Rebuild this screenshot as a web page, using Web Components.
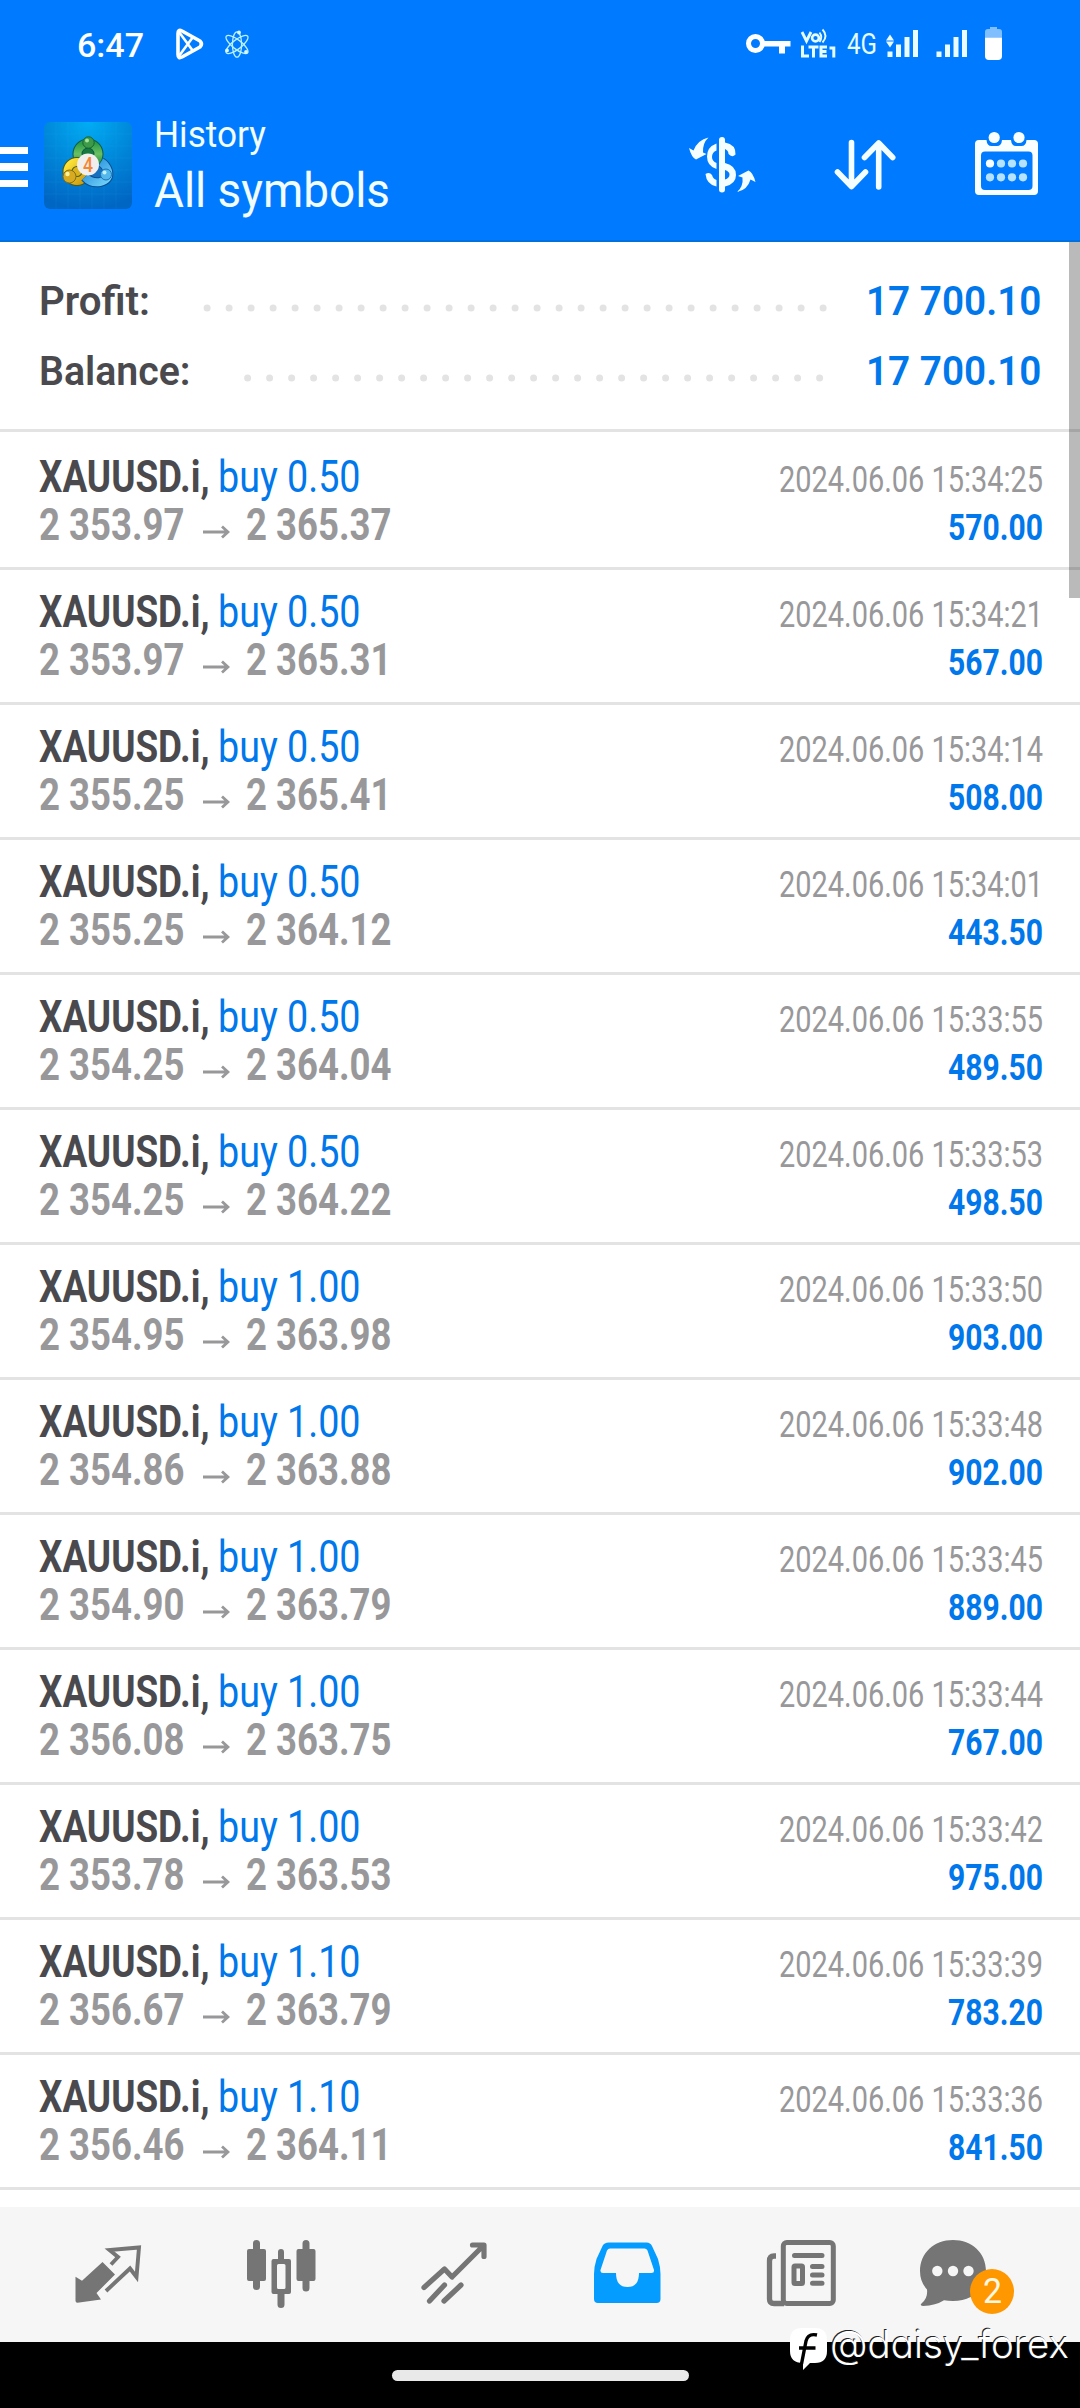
<!DOCTYPE html>
<html lang="en">
<head>
<meta charset="utf-8">
<title>History</title>
<style>
html,body{margin:0;padding:0;background:#fff}
body{width:1080px;height:2408px;overflow:hidden;font-family:Roboto,"Noto Sans",sans-serif}
</style>
</head>
<body>
<history-app></history-app>
<script>
const define = (name, html, setup) => {
  const t = document.createElement('template');
  t.innerHTML = html;
  customElements.define(name, class extends HTMLElement {
    connectedCallback() {
      if (this.shadowRoot) return;
      this.attachShadow({mode: 'open'}).append(t.content.cloneNode(true));
      if (setup) setup(this, this.shadowRoot);
    }
  });
};

/* Text narrowed so that the sample string would take w pixels. */
define('fit-text', `<style>
:host{display:block;white-space:pre;flex:none}
span{display:inline-block;transform-origin:0 50%}
</style><span></span>`, (el, root) => {
  const s = root.querySelector('span');
  const text = el.getAttribute('text');
  s.textContent = el.getAttribute('sample') || text;
  const k = (+el.getAttribute('w')) / s.getBoundingClientRect().width;
  s.textContent = text;
  const own = s.getBoundingClientRect().width;
  s.style.transform = 'scaleX(' + k + ')';
  el.style.width = own * k + 'px';
});

define('status-bar', `<style>
:host{display:flex;height:86px;color:#fff;align-items:flex-start;box-sizing:border-box}
.time{margin:27px 0 0 76.5px;font-size:34px;line-height:36px;font-weight:500;width:98px}
svg{display:block;flex:none}
</style>
<fit-text class="time" w="67" text="6:47"></fit-text>
<svg style="margin-left:30px" width="90" height="86" viewBox="174 0 90 86" fill="none" stroke="#fff">
 <path d="M178 33.500q0-4.500 4-2.500l18 10q3 3 0 6l-18 10q-4 2-4-2.500z" stroke-width="3.600" stroke-linejoin="round"/>
 <path d="M179 32l14 19M179 56l14-19" stroke-width="2.600"/>
 <g stroke="#b9f1ff" stroke-width="1.300"><ellipse cx="237" cy="44.500" rx="4.600" ry="12.700"/>
 <ellipse cx="237" cy="44.500" rx="4.600" ry="13.500" transform="rotate(52 237 44.500)"/><ellipse cx="237" cy="44.500" rx="4.600" ry="13.500" transform="rotate(-52 237 44.500)"/></g>
 <g fill="#d8f8ff" stroke="none"><circle cx="239" cy="32.500" r="1.900"/><circle cx="227" cy="50.500" r="1.900"/><circle cx="246" cy="52" r="1.900"/></g>
</svg>
<svg style="margin-left:475.500px" width="100" height="86" viewBox="740 0 100 86" fill="#fff">
 <circle cx="756.500" cy="43.500" r="7" fill="none" stroke="#fff" stroke-width="5"/>
 <path d="M765 41h26.500v5.500H786v7h-6v-7h-15z"/>
 <g fill="none" stroke="#e4fbff"><circle cx="816.500" cy="38" r="3.400" stroke-width="2.600"/>
 <path d="M803 32l4.500 9 4.500-9" stroke-width="2.800"/>
 <path d="M820.500 32.500q3.500 4.500 0 9.500M823.500 29.500q6 6.500 0 13" stroke-width="1.900"/></g>
</svg>
<svg style="margin-left:-38px" width="44" height="86" viewBox="802 0 44 86" fill="none" stroke="#e4fbff" stroke-width="3">
 <path d="M803.500 45.500v10.500h6.500M809.500 47h10M814.500 46v11.500M828 47h-6v9h6M822 51.500h5.500M830.500 48h4.300v9.500"/>
</svg>
<fit-text style="margin:29px 0 0 2px;font-size:29px;line-height:30px;color:#e4fbff" w="30" text="4G"></fit-text>
<svg style="margin-left:4px" width="126" height="86" viewBox="882 0 126 86" fill="#eafcff">
 <path d="M891 34.500l4 6h-8zM891 47.500l4-6h-8z" /><path d="M888.500 51.500h5V57h-5zM897 44.500h5V57h-5zM905.500 37h5V57h-5zM914 30h5V57h-5z"/>
 <path d="M937.500 51.500h5V57h-5zM946 44.500h5V57h-5zM954.500 37h5V57h-5zM963 30h5V57h-5z"/>
 <path d="M991 29v-2h7v2h2q3 0 3 3v5.500h-17V32q0-3 3-3z" fill="#80bfff"/>
 <path d="M986 37.500h17V56q0 4-4 4h-9q-4 0-4-4z" fill="#fff"/>
</svg>`);

define('app-logo', `<style>:host{display:block;width:88px;height:87px}svg{display:block}</style>
<svg width="88" height="87" viewBox="44 122 88 87">
<defs><radialGradient id="bg" cx="50%" cy="0%" r="100%"><stop offset="0" stop-color="#00adf4"/><stop offset=".55" stop-color="#0084d8"/><stop offset="1" stop-color="#0066c4"/></radialGradient>
<linearGradient id="g" x1="0" y1="0" x2="0" y2="1"><stop offset="0" stop-color="#2d9d48"/><stop offset=".5" stop-color="#6cc063"/><stop offset="1" stop-color="#1f8c3c"/></linearGradient>
<linearGradient id="y" x1="0" y1="0" x2="1" y2="1"><stop offset="0" stop-color="#ffe63a"/><stop offset="1" stop-color="#c99a10"/></linearGradient>
<linearGradient id="b" x1="0" y1="0" x2="1" y2="1"><stop offset="0" stop-color="#1c86d8"/><stop offset="1" stop-color="#6fd0f7"/></linearGradient></defs>
<rect x="44" y="122" width="88" height="87" rx="6" fill="url(#bg)"/>
<path d="M56 122v87M68 122v87M80 122v87M92 122v87M104 122v87M116 122v87M44 134h88M44 146h88M44 158h88M44 170h88M44 182h88M44 194h88" stroke="#39b6f0" stroke-opacity=".1"/>
<circle cx="88" cy="154" r="10.500" fill="#177a3c" stroke="#0b5b4a" stroke-width="10"/><circle cx="88" cy="154" r="10.500" fill="none" stroke="url(#g)" stroke-width="8"/>
<circle cx="77" cy="171.500" r="9.500" fill="#d9b21c" stroke="#4b5a18" stroke-width="10"/><circle cx="77" cy="171.500" r="9.500" fill="none" stroke="url(#y)" stroke-width="8"/>
<path d="M85 177q6 6.500 15 5 10-2 8-11-2-6-7-9" fill="#1670c0" stroke="#0a4e92" stroke-width="10"/><path d="M85 177q6 6.500 15 5 10-2 8-11-2-6-7-9" fill="none" stroke="url(#b)" stroke-width="8"/>
<circle cx="88.500" cy="142.500" r="5.700" fill="#3c9a48" stroke="#176333"/><circle cx="87" cy="140.500" r="2" fill="#a5e39a"/>
<circle cx="69.500" cy="176.500" r="6.500" fill="#d8aa20" stroke="#81701b"/><circle cx="67.500" cy="174" r="2.200" fill="#fff49d"/>
<circle cx="106" cy="174.500" r="5.500" fill="#55b8ea" stroke="#1971b8"/><circle cx="104.500" cy="172.500" r="2" fill="#c5f0ff"/>
<circle cx="88" cy="164.500" r="11" fill="#f1efed"/>
<text x="88" y="171.500" text-anchor="middle" font-family="Roboto" font-weight="500" font-size="19.500" fill="#f58634" textLength="10" lengthAdjust="spacingAndGlyphs">4</text>
</svg>`);

define('app-header', `<style>
:host{display:flex;height:156px;color:#f2fdff;align-items:flex-start}
svg{display:block;flex:none}
.menu{display:flex;flex-direction:column;gap:9px;margin-top:60.500px;width:28px}
.menu i{height:7.500px;background:#fff}
app-logo{margin:36px 0 0 16px;flex:none}
.t{margin:28px 0 0 21.500px;width:526px}
.a{font-size:36px;line-height:42px}.b{font-size:47.500px;line-height:56px;margin:6.500px 0 0 0}
</style>
<div class="menu"><i></i><i></i><i></i></div>
<app-logo></app-logo>
<div class="t"><fit-text class="a" w="112" text="History"></fit-text><fit-text class="b" w="236" text="All symbols"></fit-text></div>
<svg width="390" height="120" viewBox="680 86 390 120">
 <g fill="#f4feff">
 <rect x="719" y="137" width="6" height="55.500" rx="3"/>
 <path d="M716.500 143.500v7q-4.500 1.500-4.500 6.500 0 4 4.500 6v6q-9.500-3-9.500-12.500 0-9.500 9.500-13z"/>
 <path d="M725 142.500q11 2 10.500 12-3.500 3.500-7-.500 0-3.500-3.500-5z"/>
 <path d="M725 163q11 2.500 11 12 0 9-11 11.500v-7q4.500-1.500 4.500-5 0-3-4.500-4.500z" fill-rule="evenodd"/>
 <path d="M705.500 174q4-2.500 6.500 1 1 4 4.500 5v6.500q-10-2-11-12.500z"/>
 <path d="M708.500 137.500q-6 5.500-5.500 15l3.500 1.500-10.500 5.500q-4.500-2-7-11.500l4.500 2.500q4-10.500 15-13z"/>
 <path d="M737 192q6.500-5.500 5.500-14.500l-4.500-1.500 10.500-5.500q4.500 2 7 11.500l-5-2.500q-3 10.500-13.500 12.500z"/>
 </g>
 <path d="M851.500 142.500v44M837.500 172l14 14.500 14-14.500M878.700 187v-43M864.500 157.500l14.200-14.500 14 14.500" fill="none" stroke="#f4feff" stroke-width="5.600" stroke-linecap="round" stroke-linejoin="round"/>
 <path fill="#f9ffff" fill-rule="evenodd" d="M979 140h7.500q.500 6 5 6h5.500q4.500 0 5-6h9q.500 6 5 6h5.500q4.500 0 5-6h7.500q4 0 4 4v47q0 4-4 4h-55q-4 0-4-4v-47q0-4 4-4zM985 151.500q-4 0-4 4v30.500q0 4 4 4h43.500q4 0 4-4v-30.500q0-4-4-4z"/>
 <g fill="#f9ffff"><circle cx="994.200" cy="137.500" r="5.600"/><circle cx="1019" cy="137.500" r="5.600"/><circle cx="990" cy="163.500" r="4.100"/></g>
 <g fill="#b5e2ff"><circle cx="1001" cy="163.500" r="4.100"/><circle cx="1012" cy="163.500" r="4.100"/><circle cx="1023" cy="163.500" r="4.100"/><circle cx="990" cy="177.300" r="4.100"/><circle cx="1001" cy="177.300" r="4.100"/><circle cx="1012" cy="177.300" r="4.100"/><circle cx="1023" cy="177.300" r="4.100"/></g>
</svg>`);

define('summary-line', `<style>
:host{display:flex;height:70px;align-items:flex-start;font-weight:600;font-size:40px;line-height:70px}
.l{color:#4a4a4e;margin-left:38.500px}
.v{color:#0077eb;margin-right:38.500px}
.d{flex:1;height:8px;margin-top:37px}
svg{display:block;width:100%;height:8px}
</style>
<fit-text class="l"></fit-text><div class="d"><svg></svg></div><fit-text class="v"></fit-text>`, (el, root) => {
  const l = root.querySelector('.l'), v = root.querySelector('.v'), w = +el.getAttribute('w');
  const n = +el.getAttribute('dots'), x0 = +el.getAttribute('from') - 38.5 - w;
  root.querySelector('svg').innerHTML = Array.from({length: n}, (_, i) => '<circle cx="' + (x0 + i * 22) + '" cy="4" r="3.500" fill="#e3e3e4"/>').join('');
  for (const [e, text, width] of [[l, el.getAttribute('label'), w], [v, el.getAttribute('value'), 175.5]]) {
    const f = document.createElement('fit-text');
    f.className = e.className; f.setAttribute('text', text); f.setAttribute('w', width);
    e.replaceWith(f);
  }
});

define('deal-row', `<style>
:host{display:flex;justify-content:space-between;height:135px;box-sizing:border-box;border-bottom:3px solid #e3e3e4;padding:0 37.500px 0 39px}
.l{padding-top:18px;font-size:44.500px;line-height:48px}
.r{padding-top:21px;font-size:36px;line-height:48px;color:#98989a;display:flex;flex-direction:column;align-items:flex-end}
.x{display:flex}.n{font-weight:700;color:#4a4a4e;width:179px}
.b{color:#0077eb}.o{font-weight:700;color:#98989a}
svg{display:block;margin:24px 16.500px 0 18px;width:27px;height:14px;flex:none}
.p{font-weight:700;color:#0077eb}
</style>
<div class="l"><div class="x"><div class="n"><fit-text w="170.500" text="XAUUSD.i,"></fit-text></div><div class="b"></div></div>
<div class="x o"></div></div><div class="r"></div>`, (el, root) => {
  const [vol, from, to, time, profit] = el.getAttribute('deal').split('|');
  root.querySelector('.b').innerHTML = `<fit-text w="142.500" sample="buy 0.50" text="buy ${vol}"></fit-text>`;
  const price = p => `<fit-text w="145.500" sample="2 353.97" text="${p}"></fit-text>`;
  root.querySelector('.o').innerHTML = price(from) + '<svg viewBox="0 0 27 14"><path d="M0 7h24M19 1.500l6 5.500-6 5.500" fill="none" stroke="#98989a" stroke-width="2.800"/></svg>' + price(to);
  root.querySelector('.r').innerHTML = `<fit-text w="264" sample="2024.06.06 15:34:25" text="2024.06.06 ${time}"></fit-text><fit-text class="p" w="95" sample="570.00" text="${profit}"></fit-text>`;
});

define('tab-bar', `<style>
:host{display:flex;height:135px;background:#f6f6f7;align-items:flex-start}
svg{display:block;flex:none;width:180px;height:135px}
.c{position:relative}
.badge{position:absolute;left:70px;top:62px;width:44px;height:45px;border-radius:50%;background:#ff9800;color:#fff8e2;display:flex;align-items:center;justify-content:center;font-size:35px;line-height:45px}
</style>
<svg viewBox="0 2207 180 135" fill="#757575"><path d="M102.500 2262l12.500 12.500-18.500 18.500 4.500 6.500-23.500 3.300q-2 0-2-2v-24l6.500 4z"/>
<path d="M111 2264.500l7-7.500-8.500-7 29.500-2.500-2.500 29.500-6.500-8.500-24 22.500" fill="none" stroke="#757575" stroke-width="3.900" stroke-linejoin="miter"/></svg>
<svg viewBox="180 2207 180 135" fill="#757575"><path d="M253 2249v-5.500q0-3.500 3.500-3.500t3.500 3.500v5.500h4q2 0 2 2v28q0 2-2 2h-4v5.500q0 3.500-3.500 3.500t-3.500-3.500v-5.500h-4q-2 0-2-2v-28q0-2 2-2zM302.500 2249v-5.500q0-3.500 3.500-3.500t3.500 3.500v5.500h4q2 0 2 2v28q0 2-2 2h-4v7q0 3.500-3.500 3.500t-3.500-3.500v-7h-4q-2 0-2-2v-28q0-2 2-2z"/>
<path fill-rule="evenodd" d="M278 2259v-7q0-3 3-3t3 3v7h5q2 0 2 2v31q0 2-2 2h-4.500v10.500q0 3.500-3.500 3.500t-3.500-3.500v-10.500h-4q-2 0-2-2v-31q0-2 2-2zM278.500 2264q-1.500 0-1.500 1.500v22q0 1.500 1.500 1.500h5.500q1.500 0 1.500-1.500v-22q0-1.500-1.500-1.500z"/></svg>
<svg viewBox="360 2207 180 135" fill="none" stroke="#757575" stroke-width="5.200" stroke-linecap="round" stroke-linejoin="round"><path d="M424 2287.500l20.500-18.500 7.500 8 31.500-31.500M472.500 2245h11.500v11.500M429.500 2301l15-16M444 2301l17-16"/></svg>
<svg viewBox="540 2207 180 135"><path fill="#049dff" fill-rule="evenodd" d="M609 2242.500h37.500q4 0 5.500 3.500l6 13q2.500 8 2.500 15v25q0 4-4 4h-58.500q-4 0-4-4v-25q0-7 2.500-15l6-13q1.500-3.500 6.500-3.500zM610 2248.500q-2 0-3 2l-6.500 19.500q-.500 3 2.500 3h13q0 14 11.500 14t11.500-14h12.500q3 0 2.500-3l-6.500-19.500q-1-2-3-2z"/></svg>
<svg viewBox="720 2207 180 135" fill="none" stroke="#757575" stroke-width="5"><rect x="783.300" y="2242.500" width="50" height="61" rx="3.500"/><path d="M776 2256h-2q-4.500 0-4.500 5v38q0 4.500 4.500 4.500h10" stroke-width="5.300"/>
<path d="M794.500 2255.500h27.500M812.500 2266.500h9.500M812.500 2275h9.500M812.500 2283.300h9.500" stroke-linecap="round"/><rect x="794" y="2266" width="8.500" height="17.500" rx="1" stroke-width="5"/></svg>
<div class="c"><svg viewBox="900 2207 180 135"><path fill="#757575" d="M953 2240c19 0 33 13 33 31 0 19-14 30-33 30q-5 0-9-.700-8 5.200-21 5.700-4-.500-1-3 6-5 5-13.500-7-7.500-7-18.500c0-18 14-31 33-31z"/><g fill="#f6f6f7"><circle cx="937.300" cy="2271" r="5.200"/><circle cx="953" cy="2271" r="5.200"/><circle cx="968.500" cy="2271" r="5.200"/></g></svg>
<div class="badge"><fit-text w="19" text="2"></fit-text></div></div>`);

define('system-nav', `<style>
:host{display:flex;height:66px;background:#000;justify-content:center;align-items:flex-start}
i{display:block;width:297px;height:11px;border-radius:6px;background:#e9e9e9;margin-top:27.500px}
</style><i></i>`);

define('water-mark', `<style>
:host{position:absolute;left:788.500px;top:2319px;display:flex;color:#fff}
svg{display:block;width:38px;height:54px}
fit-text{margin-left:3px;font-family:Inter,sans-serif;font-feature-settings:"cv11";font-weight:300;font-size:38px;line-height:50px;text-shadow:-1px -1px 0 #222}
</style>
<svg viewBox="789 2319 38 54"><path fill="#fff" d="M802 2328h13q12 0 12 12v11q0 12-12 12h-5l-7 7v-7q-13 0-13-12v-11q0-12 12-12z"/><path d="M817 2335q-9-2-11 6l-4.500 23M799 2348h16.500" fill="none" stroke="#000" stroke-width="3.400"/></svg>
<fit-text w="239" text="@daisy_forex"></fit-text>`);

define('history-app', `<style>
:host{display:flex;flex-direction:column;width:1080px;height:2408px;position:relative;background:#fff;overflow:hidden}
header{background:#007bff;height:242px;box-sizing:border-box;border-bottom:2px solid #0070e0}
.sum{height:190px;box-sizing:border-box;border-bottom:3px solid #e3e3e4;padding-top:25px;margin-bottom:3px}
.list{height:1772px;overflow:hidden}
.bar{position:absolute;left:1069px;top:242px;width:11px;height:356px;background:rgba(0,0,0,.27)}
</style>
<header><status-bar></status-bar><app-header></app-header></header>
<div class="sum">
<summary-line label="Profit:" w="111" value="17 700.10" from="206.600" dots="29"></summary-line>
<summary-line label="Balance:" w="151.500" value="17 700.10" from="247.600" dots="27"></summary-line>
</div>
<div class="list"></div>
<tab-bar></tab-bar><system-nav></system-nav>
<div class="bar"></div><water-mark></water-mark>`, (el, root) => {
  root.querySelector('.list').innerHTML = [
    '0.50|2 353.97|2 365.37|15:34:25|570.00',
    '0.50|2 353.97|2 365.31|15:34:21|567.00',
    '0.50|2 355.25|2 365.41|15:34:14|508.00',
    '0.50|2 355.25|2 364.12|15:34:01|443.50',
    '0.50|2 354.25|2 364.04|15:33:55|489.50',
    '0.50|2 354.25|2 364.22|15:33:53|498.50',
    '1.00|2 354.95|2 363.98|15:33:50|903.00',
    '1.00|2 354.86|2 363.88|15:33:48|902.00',
    '1.00|2 354.90|2 363.79|15:33:45|889.00',
    '1.00|2 356.08|2 363.75|15:33:44|767.00',
    '1.00|2 353.78|2 363.53|15:33:42|975.00',
    '1.10|2 356.67|2 363.79|15:33:39|783.20',
    '1.10|2 356.46|2 364.11|15:33:36|841.50'
  ].map(d => `<deal-row deal="${d}"></deal-row>`).join('');
});
</script>
</body>
</html>
